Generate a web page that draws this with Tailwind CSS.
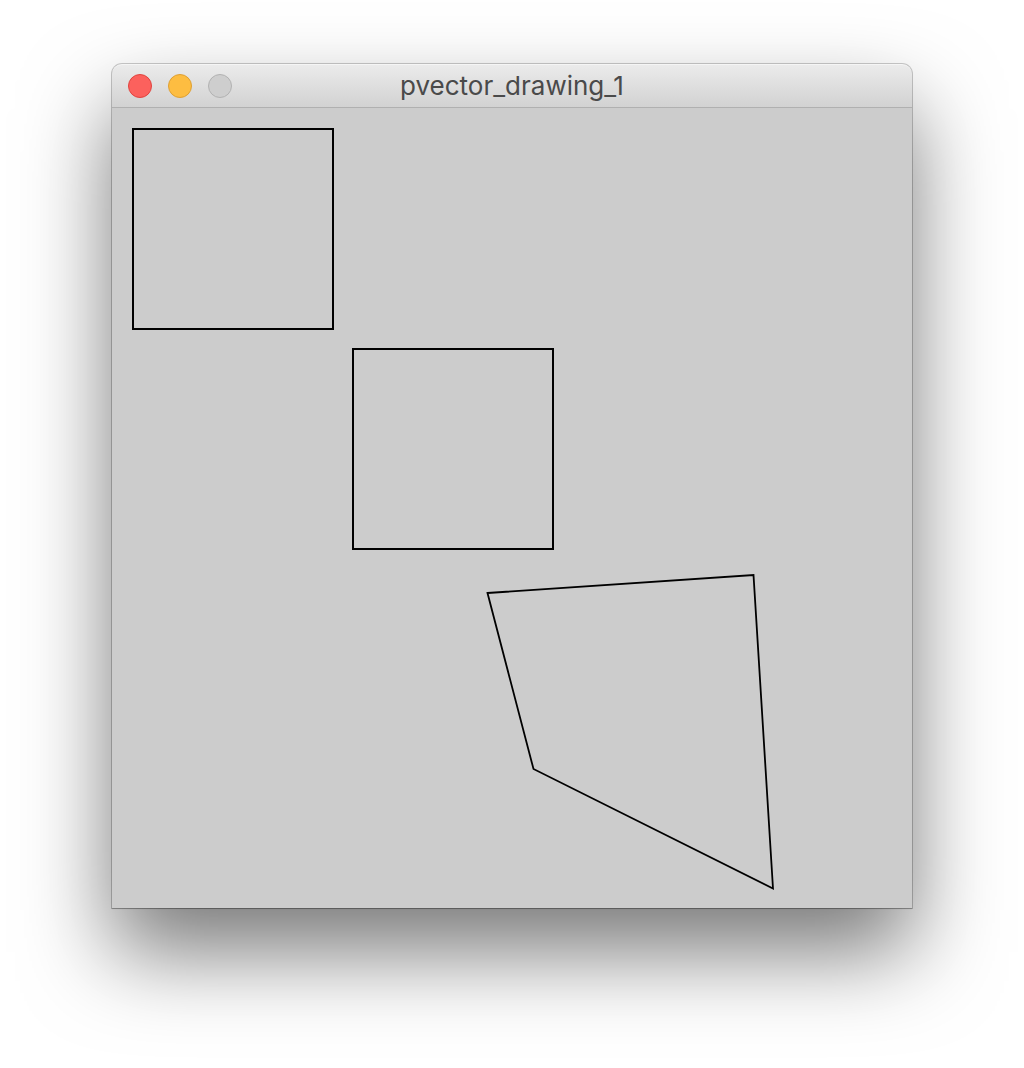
<!DOCTYPE html>
<html lang="en">
<head>
<meta charset="utf-8">
<meta name="viewport" content="width=device-width, initial-scale=1">
<title>pvector_drawing_1</title>
<script src="https://cdn.jsdelivr.net/npm/@tailwindcss/browser@4"></script>
</head>
<body class="min-h-screen bg-white px-28 pt-16 pb-40">
<main class="w-full rounded-t-[10px] bg-[#cccccc] shadow-[0_0_0_1px_rgba(0,0,0,0.2),0_1px_1px_rgba(0,0,0,0.2),0_44px_88px_rgba(0,0,0,0.53)]">
  <header class="grid h-11 grid-cols-[1fr_auto_1fr] items-center rounded-t-[10px] border-t border-b border-t-[#f5f5f5] border-b-[#b0b0b0] bg-linear-to-b from-[#ebebeb] to-[#d2d2d2] px-4">
    <div class="flex gap-4">
      <button type="button" aria-label="Close" class="size-6 rounded-full border border-[#e0443f] bg-[#fc615d]"></button>
      <button type="button" aria-label="Minimize" class="size-6 rounded-full border border-[#dea033] bg-[#fdbd41]"></button>
      <button type="button" aria-label="Zoom" disabled class="size-6 rounded-full border border-[#b2b2b2] bg-[#cecece]"></button>
    </div>
    <h1 class="font-['Inter',sans-serif] text-[26px] leading-8 text-[#4a4a4a]">pvector_drawing_1</h1>
  </header>
  <svg class="block w-full" viewBox="0 0 800 800" fill="none" stroke="#000" stroke-width="2" role="img" aria-label="Two squares and a quadrilateral">
    <rect x="21" y="21" width="200" height="200"/>
    <rect x="241" y="241" width="200" height="200"/>
    <path stroke-width="1.8" d="M375.5 485 641.5 467 661 780.5 421.5 661Z"/>
  </svg>
</main>
</body>
</html>
